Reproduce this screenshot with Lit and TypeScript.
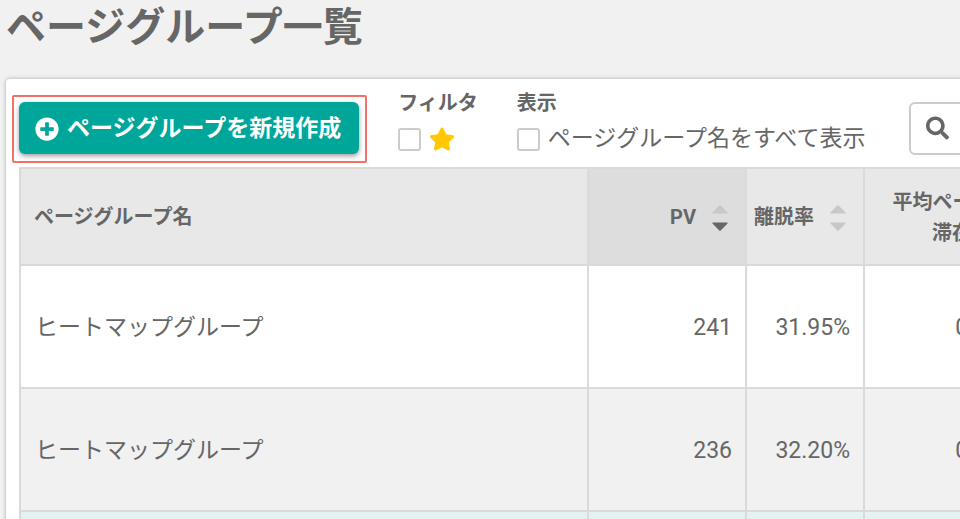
import { LitElement, html, css, svg } from "lit";
import { customElement, property, state } from "lit/decorators.js";
import { classMap } from "lit/directives/class-map.js";

type SortDir = "none" | "asc" | "desc";

interface Row {
  name: string;
  pv: string;
  exitRate: string;
  stay: string;
}

const ROWS: Row[] = [
  { name: "ヒートマップグループ", pv: "241", exitRate: "31.95%", stay: "00:01:24" },
  { name: "ヒートマップグループ", pv: "236", exitRate: "32.20%", stay: "00:01:18" },
];

const plusCircle = svg`<path fill="currentColor" d="M256 8C119 8 8 119 8 256s111 248 248 248 248-111 248-248S393 8 256 8zm144 276c0 6.6-5.4 12-12 12h-92v92c0 6.6-5.4 12-12 12h-56c-6.6 0-12-5.4-12-12v-92h-92c-6.6 0-12-5.4-12-12v-56c0-6.6 5.4-12 12-12h92v-92c0-6.6 5.4-12 12-12h56c6.6 0 12 5.4 12 12v92h92c6.6 0 12 5.4 12 12v56z"/>`;
const star = svg`<path fill="currentColor" d="M259.3 17.8L194 150.2 47.9 171.5c-26.2 3.8-36.7 36.1-17.7 54.6l105.7 103-25 145.5c-4.5 26.3 23.2 46 46.4 33.7L288 439.6l130.7 68.7c23.2 12.2 50.9-7.4 46.4-33.7l-25-145.5 105.7-103c19-18.5 8.5-50.8-17.7-54.6L382 150.2 316.7 17.8c-11.7-23.6-45.6-23.9-57.4 0z"/>`;
const magnifier = svg`<path fill="currentColor" d="M505 442.7L405.3 343c-4.5-4.5-10.6-7-17-7H372c27.6-35.3 44-79.7 44-128C416 93.1 322.9 0 208 0S0 93.1 0 208s93.1 208 208 208c48.3 0 92.7-16.4 128-44v16.3c0 6.4 2.5 12.5 7 17l99.7 99.7c9.4 9.4 24.6 9.4 33.9 0l28.3-28.3c9.4-9.4 9.4-24.6.1-34zM208 336c-70.7 0-128-57.2-128-128 0-70.7 57.2-128 128-128 70.7 0 128 57.2 128 128 0 70.7-57.2 128-128 128z"/>`;

@customElement("sort-button")
export class SortButton extends LitElement {
  @property() direction: SortDir = "none";
  @property() label = "";

  static styles = css`
    :host {
      display: block;
      flex: none;
    }
    .sort {
      display: block;
      margin: 0;
      padding: 0;
      border: 0;
      background: none;
      cursor: pointer;
    }
    .arrows {
      display: block;
      width: 16px;
      height: 26px;
    }
    .arrow {
      fill: #c8c8c8;
    }
    .arrow.active {
      fill: #666;
    }
  `;

  render() {
    return html`<button class="sort" type="button" aria-label=${this.label}>
      <svg class="arrows" viewBox="0 0 16 26" aria-hidden="true">
        <path
          class=${classMap({ arrow: true, active: this.direction === "asc" })}
          d="M7.3.4a1 1 0 0 1 1.4 0l6.8 7c.5.5.2 1.1-.5 1.1H1c-.7 0-1-.6-.5-1.1z"
        />
        <path
          class=${classMap({ arrow: true, active: this.direction === "desc" })}
          d="M7.3 25.6a1 1 0 0 0 1.4 0l6.8-7c.5-.5.2-1.1-.5-1.1H1c-.7 0-1 .6-.5 1.1z"
        />
      </svg>
    </button>`;
  }
}

@customElement("app-root")
export class AppRoot extends LitElement {
  @state() private onlyStarred = false;
  @state() private showFullNames = false;

  static styles = css`
    :host {
      display: block;
      min-height: 100vh;
      overflow: hidden;
      background: #f1f1f1;
      color: #666;
      font-family: Roboto, "Noto Sans CJK JP", sans-serif;
      font-size: 23px;
      line-height: 32px;
    }
    * {
      box-sizing: border-box;
    }
    .title {
      margin: 0;
      padding: 0 6px 23px;
      font-size: 40px;
      line-height: 56px;
      font-weight: 700;
      white-space: nowrap;
    }
    .card {
      width: max-content;
      min-width: 100%;
      margin-left: 6px;
      padding: 12px 6px 24px;
      border-radius: 4px;
      background: #fff;
      box-shadow: 0 0 4px rgba(0, 0, 0, 0.3);
    }
    .toolbar {
      display: flex;
      align-items: center;
      height: 76px;
    }
    .highlight {
      flex: none;
      padding: 5px 6px 7px 5px;
      border: 2px solid #f37068;
      border-radius: 2px;
    }
    .create {
      display: flex;
      align-items: center;
      gap: 8px;
      height: 52px;
      margin: 0;
      padding: 2px 18px 0 16px;
      border: 0;
      border-radius: 6px;
      background: #00a699;
      color: #fff;
      font: inherit;
      font-weight: 700;
      white-space: nowrap;
      box-shadow: 0 2px 5px rgba(0, 0, 0, 0.4);
      cursor: pointer;
    }
    .icon {
      display: block;
      flex: none;
      width: 24px;
      height: 24px;
    }
    .star {
      width: 26px;
      color: #ffc800;
    }
    .group {
      flex: none;
      align-self: flex-start;
      margin: 0 0 0 31px;
      padding: 0;
      border: 0;
      white-space: nowrap;
    }
    .group + .group {
      margin-left: 39px;
    }
    .caption {
      display: block;
      padding: 0;
      font-size: 20px;
      line-height: 24px;
      font-weight: 700;
    }
    .option {
      display: flex;
      align-items: center;
      gap: 8px;
      height: 24px;
      margin-top: 12px;
    }
    .check {
      appearance: none;
      flex: none;
      width: 23px;
      height: 23px;
      margin: 0;
      border: 2px solid #ccc;
      border-radius: 3px;
      background: #fff;
    }
    .check:checked {
      background: #00a699;
    }
    .search {
      display: flex;
      flex: 1 1 0;
      align-items: center;
      gap: 12px;
      min-width: 0;
      height: 53px;
      margin: 0 7px 2px 44px;
      padding: 0 15px;
      border: 2px solid #ccc;
      border-radius: 6px;
    }
    .magnifier {
      width: 23px;
    }
    .query {
      flex: 1 1 0;
      width: 0;
      min-width: 0;
      padding: 0;
      border: 0;
      outline: 0;
      background: none;
      color: inherit;
      font: inherit;
    }
    .table {
      width: calc(100% - 14px);
      margin: 0 7px;
      border: solid #dadada;
      border-width: 2px 0 0 2px;
      border-spacing: 0;
    }
    .col-name {
      width: 568px;
    }
    .col-pv {
      width: 158px;
    }
    .col-rate {
      width: 118px;
    }
    .col-stay {
      width: 198px;
    }
    .head,
    .cell {
      padding: 2px 13px 0;
      border: solid #dadada;
      border-width: 0 2px 2px 0;
      text-align: right;
      white-space: nowrap;
    }
    .head {
      height: 97px;
      padding-right: 17px;
      background: #e8e8e8;
      font-size: 20px;
      line-height: 31px;
      font-weight: 700;
    }
    .head.sorted {
      background: #ddd;
    }
    .head.compact {
      padding-left: 6px;
    }
    .sortable {
      display: flex;
      align-items: center;
      justify-content: flex-end;
      gap: 16px;
    }
    .cell {
      height: 123px;
      font-weight: 400;
    }
    .name {
      text-align: left;
    }
    .cell.name {
      padding-left: 14px;
    }
    .cell.stay {
      padding-right: 17px;
    }
    .row:nth-child(even) .cell {
      background: #f1f1f1;
    }
    .row.summary .cell {
      background: #e4f3f2;
    }
  `;

  render() {
    return html`
      <h1 class="title">ページグループ一覧</h1>
      <main class="card">
        <div class="toolbar">
          <div class="highlight">
            <button class="create" type="button">
              <svg class="icon" viewBox="0 0 512 512" aria-hidden="true">${plusCircle}</svg>
              <span>ページグループを新規作成</span>
            </button>
          </div>
          <fieldset class="group">
            <legend class="caption">フィルタ</legend>
            <label class="option">
              <input
                class="check"
                type="checkbox"
                aria-label="フィルタ"
                .checked=${this.onlyStarred}
                @change=${() => (this.onlyStarred = !this.onlyStarred)}
              />
              <svg class="icon star" viewBox="0 0 576 512" aria-hidden="true">${star}</svg>
            </label>
          </fieldset>
          <fieldset class="group">
            <legend class="caption">表示</legend>
            <label class="option">
              <input
                class="check"
                type="checkbox"
                .checked=${this.showFullNames}
                @change=${() => (this.showFullNames = !this.showFullNames)}
              />
              <span>ページグループ名をすべて表示</span>
            </label>
          </fieldset>
          <label class="search">
            <svg class="icon magnifier" viewBox="0 0 512 512" aria-hidden="true">${magnifier}</svg>
            <input class="query" type="text" aria-label="検索" />
          </label>
        </div>
        <table class="table">
          <colgroup>
            <col class="col-name" />
            <col class="col-pv" />
            <col class="col-rate" />
            <col class="col-stay" />
          </colgroup>
          <thead>
            <tr>
              <th class="head name" scope="col">ページグループ名</th>
              <th class="head sorted" scope="col" aria-sort="descending">
                <div class="sortable">
                  <span>PV</span><sort-button direction="desc" label="PV"></sort-button>
                </div>
              </th>
              <th class="head compact" scope="col">
                <div class="sortable">
                  <span>離脱率</span><sort-button label="離脱率"></sort-button>
                </div>
              </th>
              <th class="head" scope="col">
                <div class="sortable">
                  <span>平均ページの<br />滞在時間</span><sort-button label="平均ページの滞在時間"></sort-button>
                </div>
              </th>
            </tr>
          </thead>
          <tbody>
            ${ROWS.map(
              (row) => html`<tr class="row">
                <td class="cell name">${row.name}</td>
                <td class="cell">${row.pv}</td>
                <td class="cell">${row.exitRate}</td>
                <td class="cell stay">${row.stay}</td>
              </tr>`
            )}
            <tr class="row summary">
              <td class="cell name"></td>
              <td class="cell"></td>
              <td class="cell"></td>
              <td class="cell"></td>
            </tr>
          </tbody>
        </table>
      </main>
    `;
  }
}
